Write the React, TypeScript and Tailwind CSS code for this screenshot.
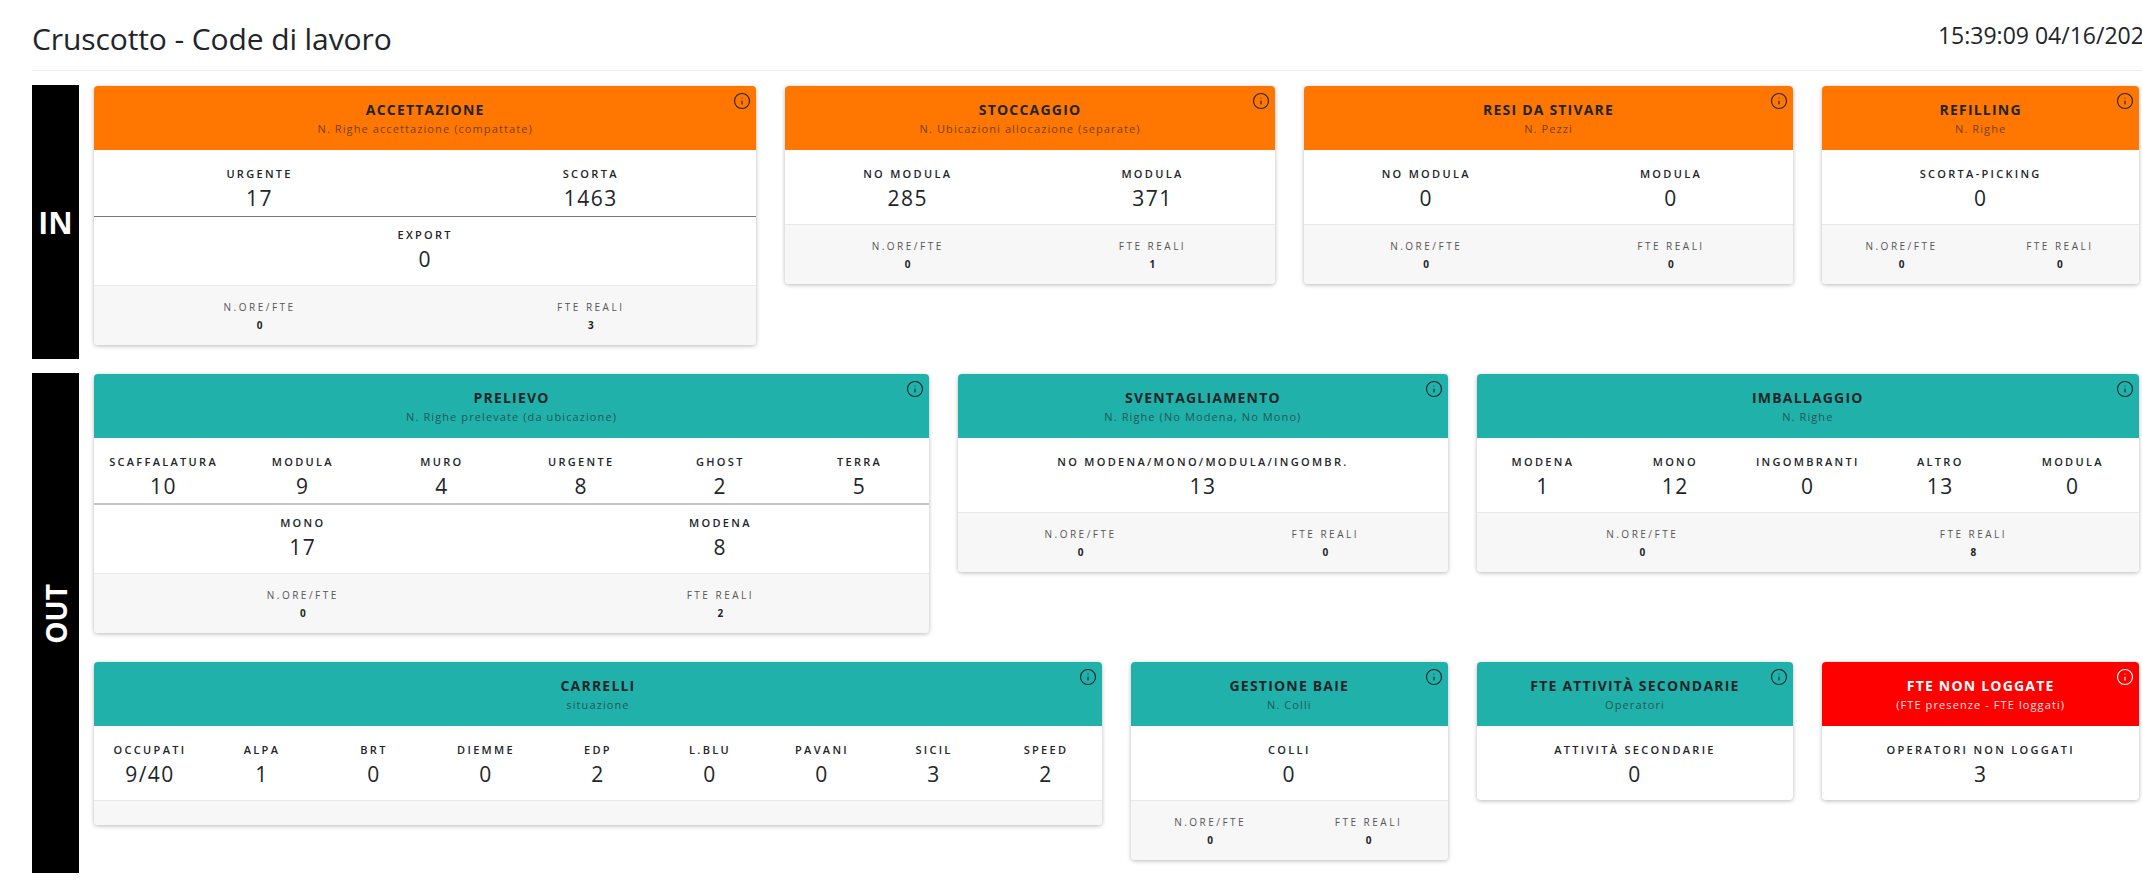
import { Info } from "lucide-react";

type Col = [string, string];
type CardProps = {
  title: string;
  sub: string;
  color: "orange" | "teal" | "red";
  span: "col-span-2" | "col-span-3" | "col-span-4" | "col-span-5" | "col-span-6";
  rows: Col[][];
  footer?: [string, string] | "empty" | null;
  softDivider?: boolean;
};

function Card({ title, sub, color, span, rows, footer, softDivider }: CardProps) {
  const bg = color === "orange" ? "bg-[#ff7700]" : color === "teal" ? "bg-[#20b2aa]" : "bg-[#ff0000]";
  const red = color === "red";
  const divider = softDivider ? "border-b-2 border-[#c4c4c4]" : "border-b border-[#777777]";
  return (
    <div className={`${span} self-start bg-white rounded-[4px] overflow-hidden shadow-[0_1px_4px_rgba(0,0,0,0.28)]`}>
      <div className={`${bg} relative h-[64px] flex flex-col items-center pt-[15px] ${red ? "text-white" : "text-[#212529]"}`}>
        <Info size={18} strokeWidth={1.5} className="absolute top-[6px] right-[5px]" />
        <div className="text-[14px] leading-[18px] font-bold tracking-[1.2px] whitespace-nowrap">{title}</div>
        <div className={`text-[11px] leading-[16px] mt-[2px] tracking-[1.1px] whitespace-nowrap ${red ? "opacity-90" : "opacity-65"}`}>{sub}</div>
      </div>
      {rows.map((row, i) => (
        <div
          key={i}
          className={`flex ${rows.length > 1 ? (i === 0 ? `h-[67px] pt-[16px] ${divider}` : "h-[68px] pt-[10px]") : "h-[74px] pt-[16px]"}`}
        >
          {row.map(([label, value]) => (
            <div key={label} className="flex-1 flex flex-col items-center min-w-0 text-[#212529]">
              <div className="text-[11px] leading-[16px] font-semibold tracking-[2.3px] whitespace-nowrap">{label}</div>
              <div className="text-[21px] leading-[28px] mt-[2px] tracking-[1.5px]">{value}</div>
            </div>
          ))}
        </div>
      ))}
      {footer === "empty" && <div className="h-[25px] bg-[#f7f7f7] border-t border-[#e9e9e9]" />}
      {footer && footer !== "empty" && (
        <div className="flex h-[60px] pt-[14px] bg-[#f7f7f7] border-t border-[#e9e9e9]">
          {[["N.ORE/FTE", footer[0]], ["FTE REALI", footer[1]]].map(([label, value]) => (
            <div key={label} className="flex-1 flex flex-col items-center text-[#212529]">
              <div className="text-[10px] leading-[14px] tracking-[2.5px] text-[#555555]">{label}</div>
              <div className="text-[10px] leading-[14px] mt-[4px] font-bold">{value}</div>
            </div>
          ))}
        </div>
      )}
    </div>
  );
}

export default function App() {
  return (
    <div className="w-[2142px] h-[896px] overflow-hidden bg-white font-['Open_Sans',sans-serif] text-[#212529]">
      <div className="ml-[32px] w-[2125px] h-[71px] border-b border-[#eeeeee] flex justify-between items-start">
        <div className="text-[30px] leading-[40px] mt-[19px] tracking-[-0.1px]">Cruscotto - Code di lavoro</div>
        <div className="text-[23px] leading-[32px] mt-[19px] whitespace-nowrap">15:39:09 04/16/2024</div>
      </div>

      <div className="flex pl-[32px] pr-[3px] mt-[14px] gap-[15px]">
        <div className="w-[47px] h-[274px] shrink-0 bg-black text-white font-bold flex items-center justify-center text-[30px]">IN</div>
        <div className="flex-1 grid grid-cols-12 gap-x-[29px] pt-[1px]">
          <Card
            span="col-span-4"
            color="orange"
            title="ACCETTAZIONE"
            sub="N. Righe accettazione (compattate)"
            rows={[[["URGENTE", "17"], ["SCORTA", "1463"]], [["EXPORT", "0"]]]}
            footer={["0", "3"]}
          />
          <Card
            span="col-span-3"
            color="orange"
            title="STOCCAGGIO"
            sub="N. Ubicazioni allocazione (separate)"
            rows={[[["NO MODULA", "285"], ["MODULA", "371"]]]}
            footer={["0", "1"]}
          />
          <Card
            span="col-span-3"
            color="orange"
            title="RESI DA STIVARE"
            sub="N. Pezzi"
            rows={[[["NO MODULA", "0"], ["MODULA", "0"]]]}
            footer={["0", "0"]}
          />
          <Card
            span="col-span-2"
            color="orange"
            title="REFILLING"
            sub="N. Righe"
            rows={[[["SCORTA-PICKING", "0"]]]}
            footer={["0", "0"]}
          />
        </div>
      </div>

      <div className="flex pl-[32px] pr-[3px] mt-[14px] gap-[15px]">
        <div className="w-[47px] h-[500px] pb-[18px] shrink-0 bg-black text-white font-bold flex items-center justify-center text-[28px]">
          <span className="[writing-mode:vertical-rl] rotate-180">OUT</span>
        </div>
        <div className="flex-1 grid grid-cols-12 gap-x-[29px] gap-y-[29px] pt-[1px] content-start">
          <Card
            span="col-span-5"
            color="teal"
            title="PRELIEVO"
            sub="N. Righe prelevate (da ubicazione)"
            softDivider
            rows={[
              [["SCAFFALATURA", "10"], ["MODULA", "9"], ["MURO", "4"], ["URGENTE", "8"], ["GHOST", "2"], ["TERRA", "5"]],
              [["MONO", "17"], ["MODENA", "8"]],
            ]}
            footer={["0", "2"]}
          />
          <Card
            span="col-span-3"
            color="teal"
            title="SVENTAGLIAMENTO"
            sub="N. Righe (No Modena, No Mono)"
            rows={[[["NO MODENA/MONO/MODULA/INGOMBR.", "13"]]]}
            footer={["0", "0"]}
          />
          <Card
            span="col-span-4"
            color="teal"
            title="IMBALLAGGIO"
            sub="N. Righe"
            rows={[[["MODENA", "1"], ["MONO", "12"], ["INGOMBRANTI", "0"], ["ALTRO", "13"], ["MODULA", "0"]]]}
            footer={["0", "8"]}
          />
          <Card
            span="col-span-6"
            color="teal"
            title="CARRELLI"
            sub="situazione"
            rows={[[["OCCUPATI", "9/40"], ["ALPA", "1"], ["BRT", "0"], ["DIEMME", "0"], ["EDP", "2"], ["L.BLU", "0"], ["PAVANI", "0"], ["SICIL", "3"], ["SPEED", "2"]]]}
            footer="empty"
          />
          <Card
            span="col-span-2"
            color="teal"
            title="GESTIONE BAIE"
            sub="N. Colli"
            rows={[[["COLLI", "0"]]]}
            footer={["0", "0"]}
          />
          <Card
            span="col-span-2"
            color="teal"
            title="FTE ATTIVITÀ SECONDARIE"
            sub="Operatori"
            rows={[[["ATTIVITÀ SECONDARIE", "0"]]]}
          />
          <Card
            span="col-span-2"
            color="red"
            title="FTE NON LOGGATE"
            sub="(FTE presenze - FTE loggati)"
            rows={[[["OPERATORI NON LOGGATI", "3"]]]}
          />
        </div>
      </div>
    </div>
  );
}
